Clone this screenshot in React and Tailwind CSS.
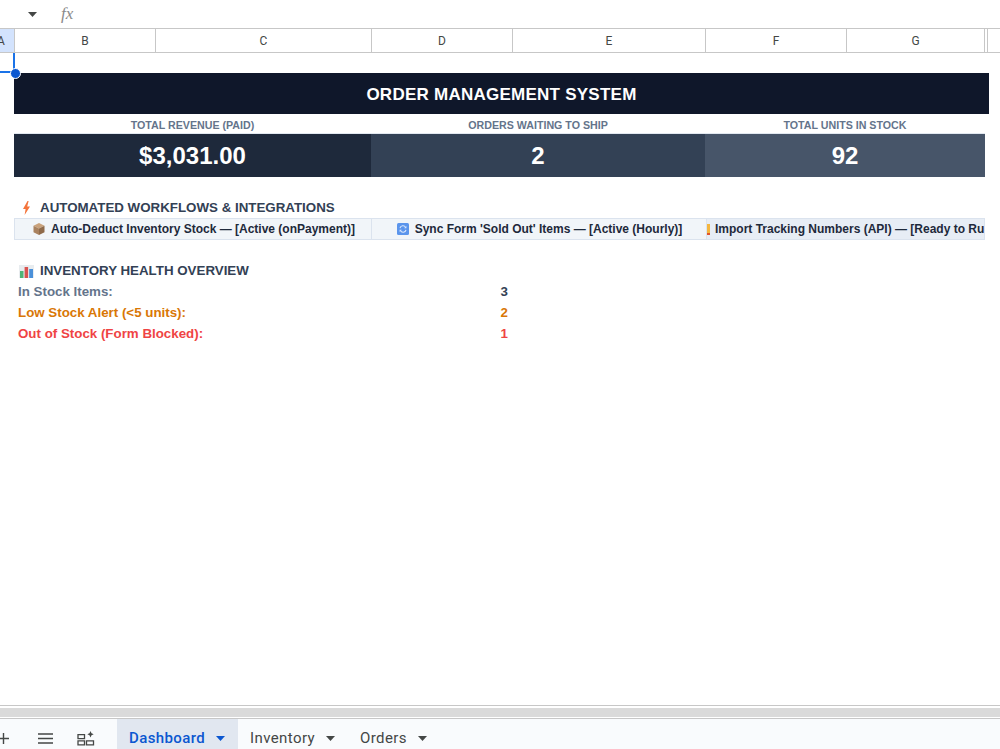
import React from "react";

const cols = [
  ["A", "w-[15px]", true],
  ["B", "w-[141px]"],
  ["C", "w-[216px]"],
  ["D", "w-[141px]"],
  ["E", "w-[193px]"],
  ["F", "w-[141px]"],
  ["G", "w-[138px]"],
  ["", "w-[3px]"],
  ["", "flex-1"],
];

function Caret({ className }) {
  return (
    <svg className={className} width="9" height="5" viewBox="0 0 9 5">
      <path d="M0 0h9L4.5 5z" fill="currentColor" />
    </svg>
  );
}

function Bolt() {
  return (
    <svg width="9" height="14" viewBox="0 0 9 14">
      <path d="M5.5 0 1 8h2.6L2.6 14 8 5.6H5.2L6.6 0z" fill="#f4743b" />
    </svg>
  );
}

function Box() {
  return (
    <svg width="12" height="12" viewBox="0 0 12 12">
      <path d="M6 0 11.5 2.8 6 5.6 .5 2.8z" fill="#c9a27c" />
      <path d="M.5 2.8 6 5.6V12L.5 9.2z" fill="#a9825f" />
      <path d="M11.5 2.8 6 5.6V12l5.5-2.8z" fill="#8f6a4a" />
    </svg>
  );
}

function Sync() {
  return (
    <svg width="12" height="12" viewBox="0 0 12 12">
      <rect width="12" height="12" rx="1.5" fill="#5b95ec" />
      <path d="M3 5.2A3 3 0 0 1 8.6 4.4M9 6.8A3 3 0 0 1 3.4 7.6" fill="none" stroke="#dbe8fb" strokeWidth="1.1" />
      <path d="M9.4 3v2.2H7.2zM2.6 9V6.8h2.2z" fill="#dbe8fb" />
    </svg>
  );
}

function Chart() {
  return (
    <svg width="15" height="13" viewBox="0 0 15 13">
      <rect width="15" height="13" fill="#e8ecef" />
      <rect x="1" y="6" width="3.5" height="7" fill="#4fb477" />
      <rect x="5.6" y="2" width="3.5" height="11" fill="#d9534f" />
      <rect x="10.2" y="4" width="3.8" height="9" fill="#4a90d9" />
    </svg>
  );
}

function TabIcons() {
  return (
    <>
      <svg className="ml-[-2px]" width="11" height="11" viewBox="0 0 11 11">
        <path d="M5.5 0v11M0 5.5h11" stroke="#444746" strokeWidth="1.4" />
      </svg>
      <svg className="ml-[29px]" width="15" height="11" viewBox="0 0 15 11">
        <path d="M0 1h15M0 5.5h15M0 10h15" stroke="#444746" strokeWidth="1.4" />
      </svg>
      <svg className="ml-[24px]" width="18" height="16" viewBox="0 0 18 16">
        <path d="M1 4.6h6.5v4H1zM1 10.8h6.5v4H1zM9.5 10.8h7v4h-7z" fill="none" stroke="#444746" strokeWidth="1.3" />
        <path d="M13.5 1l1 2.2 2.2 1-2.2 1-1 2.2-1-2.2-2.2-1 2.2-1z" fill="#444746" />
      </svg>
    </>
  );
}

function Kpi({ w, label, value, bg }) {
  return (
    <div className={`${w} flex flex-col`}>
      <div className="h-5 pt-[2px] flex items-center justify-center text-[10.67px] font-bold text-[#64748b] border-b border-[#e2e8f0]">
        {label}
      </div>
      <div className={`h-[43px] flex items-center justify-center text-[24px] font-bold text-white ${bg}`}>
        {value}
      </div>
    </div>
  );
}

function Workflow({ w, icon, text, justify = "justify-center", extra = "" }) {
  return (
    <div className={`${w} h-full flex items-center overflow-hidden whitespace-nowrap gap-[6px] border-r border-[#dbe3ee] text-[12px] font-bold text-[#1e293b] ${justify} ${extra}`}>
      {icon}
      <span>{text}</span>
    </div>
  );
}

function Stat({ label, value, color }) {
  return (
    <div className={`h-[21px] flex items-center text-[13.33px] font-bold ${color}`}>
      <span className="w-[484px] pl-[4px]">{label}</span>
      <span className="w-[10px] text-right">{value}</span>
    </div>
  );
}

function Tab({ label, active, w }) {
  return (
    <div className={`${w} h-full flex items-center pl-3 pt-[8px] text-[15px] tracking-[0.4px] font-['Roboto',sans-serif] ${active ? "bg-[#e1e7f0] text-[#0b57d0] font-medium" : "text-[#444746]"}`}>
      <span>{label}</span>
      <Caret className="ml-[11px]" />
    </div>
  );
}

export default function App() {
  return (
    <div className="relative w-[1000px] h-[749px] overflow-hidden flex flex-col bg-white font-['Liberation_Sans',Arial,sans-serif]">
      <div className="h-[29px] shrink-0 border-b border-[#c7c7c7] flex items-center">
        <Caret className="ml-[28px] text-[#444746]" />
        <span className="ml-[24px] text-[17px] italic text-[#8a8a8a] font-['Liberation_Serif',serif]">fx</span>
      </div>

      <div className="h-6 shrink-0 flex border-b border-[#c7c7c7]">
        {cols.map(([name, w, sel], i) => (
          <div
            key={i}
            className={`${w} shrink-0 h-full flex items-center justify-center text-[12px] text-[#444746] font-['Roboto',sans-serif] ${i < cols.length - 1 ? "border-r border-[#c7c7c7]" : ""} ${sel ? "bg-[#d3e3fd] text-[#0b1f3f] !justify-start" : ""}`}
          >
            <span className={sel ? "ml-[-3px]" : ""}>{name}</span>
          </div>
        ))}
      </div>

      <div className="relative flex-1 pl-[14px] pt-5">
        <div className="absolute left-0 top-0 w-[15px] h-[20px] border-r-2 border-b-2 border-[#1a73e8]" />
        <div className="absolute left-[10px] top-[15px] w-[11px] h-[11px] rounded-full bg-[#0b57d0] border border-white" />

        <div className="w-[975px] h-[41px] pt-[2px] bg-[#0f172a] flex items-center justify-center text-[17px] font-bold text-white tracking-[0.25px]">
          ORDER MANAGEMENT SYSTEM
        </div>

        <div className="flex w-[971px]">
          <Kpi w="w-[357px]" label="TOTAL REVENUE (PAID)" value="$3,031.00" bg="bg-[#1e293b]" />
          <Kpi w="w-[334px]" label="ORDERS WAITING TO SHIP" value="2" bg="bg-[#334155]" />
          <Kpi w="w-[280px]" label="TOTAL UNITS IN STOCK" value="92" bg="bg-[#475569]" />
        </div>

        <div className="mt-[22px] h-[18px] flex items-center text-[13.33px] font-bold text-[#334155]">
          <span className="ml-[8px] w-[18px] flex"><Bolt /></span>
          AUTOMATED WORKFLOWS &amp; INTEGRATIONS
        </div>

        <div className="mt-[1px] w-[971px] h-[22px] flex bg-[#f1f5f9] border border-[#dbe3ee]">
          <Workflow w="w-[357px]" extra="pl-[2px]" icon={<Box />} text="Auto-Deduct Inventory Stock — [Active (onPayment)]" />
          <Workflow w="w-[335px]" extra="pl-[1px]" icon={<Sync />} text="Sync Form 'Sold Out' Items — [Active (Hourly)]" />
          <Workflow
            w="flex-1"
            justify="justify-start"
            extra="bg-[#e7edf5] !border-r-0 !gap-[5px]"
            icon={<span className="w-[3px] h-[11px] shrink-0 bg-[#f4b63f] border-b-2 border-[#e2552d]" />}
            text="Import Tracking Numbers (API) — [Ready to Run]"
          />
        </div>

        <div className="mt-[21px] h-[20px] flex items-center text-[13.33px] font-bold text-[#334155]">
          <span className="ml-[5px] w-[21px] flex"><Chart /></span>
          INVENTORY HEALTH OVERVIEW
        </div>

        <Stat label="In Stock Items:" value="3" color="text-[#64748b] [&>span:last-child]:text-[#334155]" />
        <Stat label="Low Stock Alert (<5 units):" value="2" color="text-[#d97706]" />
        <Stat label="Out of Stock (Form Blocked):" value="1" color="text-[#ef4444]" />
      </div>

      <div className="h-[14px] shrink-0 border-y border-[#c7c7c7] bg-white flex items-center">
        <div className="w-full h-[9px] bg-[#dadada]" />
      </div>

      <div className="h-[30px] shrink-0 bg-[#f9fbfd] flex items-center">
        <div className="flex items-center pt-[8px]">
          <TabIcons />
        </div>
        <div className="ml-[22px] h-full flex">
          <Tab label="Dashboard" active w="w-[121px]" />
          <Tab label="Inventory" w="w-[110px]" />
          <Tab label="Orders" w="w-[90px]" />
        </div>
      </div>
    </div>
  );
}
